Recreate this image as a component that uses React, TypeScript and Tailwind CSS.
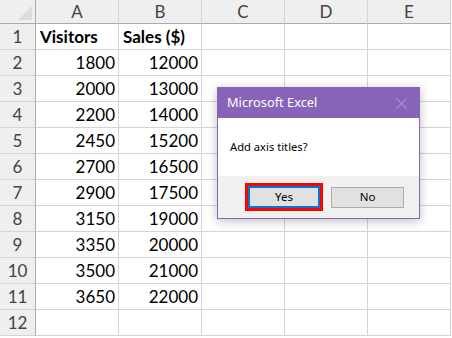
import React from "react";

const cols = ["A", "B", "C", "D", "E"];
const data: [string, string][] = [
  ["Visitors", "Sales ($)"],
  ["1800", "12000"],
  ["2000", "13000"],
  ["2200", "14000"],
  ["2450", "15200"],
  ["2700", "16500"],
  ["2900", "17500"],
  ["3150", "19000"],
  ["3350", "20000"],
  ["3500", "21000"],
  ["3650", "22000"],
  ["", ""],
];

function Dialog() {
  return (
    <div className="absolute left-[217px] top-[87px] w-[203px] h-[132px] border border-[#8764b8] bg-white shadow-[0_2px_10px_rgba(0,0,0,0.25)] flex flex-col font-['Noto_Sans',sans-serif]">
      <div className="h-[30px] bg-[#8764b8] flex items-center justify-between pl-[9px] pr-[9px]">
        <span className="text-white text-[12.8px]">Microsoft Excel</span>
        <svg width="11" height="11" viewBox="0 0 11 11" className="mr-[3px]">
          <path d="M0.5 0.5L10.5 10.5M10.5 0.5L0.5 10.5" stroke="#a48ccc" strokeWidth="1.2" />
        </svg>
      </div>
      <div className="flex-1 flex items-center pl-[12px] text-[11.2px] text-black">Add axis titles?</div>
      <div className="h-[42px] bg-[#f0f0f0] flex items-center pl-[27px] gap-[8px]">
        <div className="w-[78px] h-[28px] border-[3px] border-[#ff0000]">
          <div className="w-full h-full border-2 border-[#0078d7] bg-[#e1e1e1] flex items-center justify-center text-[11.5px] text-black">Yes</div>
        </div>
        <div className="w-[73px] h-[21px] border border-[#adadad] bg-[#e1e1e1] flex items-center justify-center text-[11.5px] text-black">No</div>
      </div>
    </div>
  );
}

export default function App() {
  return (
    <div className="relative w-[452px] h-[338px] bg-white overflow-hidden font-['Lato',sans-serif]">
      <div className="grid grid-cols-[36px_repeat(5,83px)]">
        <div className="h-[24px] bg-[#efefef] border-r border-b border-[#ababab] relative">
          <svg width="14" height="14" viewBox="0 0 14 14" className="absolute right-[3px] bottom-[3px]">
            <polygon points="14,0 14,14 0,14" fill="#dcdcdc" />
          </svg>
        </div>
        {cols.map((c) => (
          <div
            key={c}
            className="h-[24px] bg-[#efefef] border-r border-b border-r-[#d4d4d4] border-b-[#ababab] flex items-center justify-center text-[17px] leading-none text-[#444]"
          >
            {c}
          </div>
        ))}
        {data.map((row, i) => (
          <React.Fragment key={i}>
            <div className="h-[26px] bg-[#efefef] border-r border-b border-r-[#ababab] border-b-[#d4d4d4] flex items-center justify-center text-[17px] leading-none text-[#444]">
              {i + 1}
            </div>
            {[0, 1].map((j) => (
              <div
                key={j}
                className={
                  "h-[26px] border-r border-b border-[#d4d4d4] flex items-center text-[17px] leading-none text-black " +
                  (i === 0 ? "justify-start pl-[4px] font-bold" : "justify-end pr-[3px]")
                }
              >
                {row[j]}
              </div>
            ))}
            <div className="h-[26px] border-r border-b border-[#d4d4d4]" />
            <div className="h-[26px] border-r border-b border-[#d4d4d4]" />
            <div className="h-[26px] border-r border-b border-[#d4d4d4]" />
          </React.Fragment>
        ))}
      </div>
      <Dialog />
    </div>
  );
}
